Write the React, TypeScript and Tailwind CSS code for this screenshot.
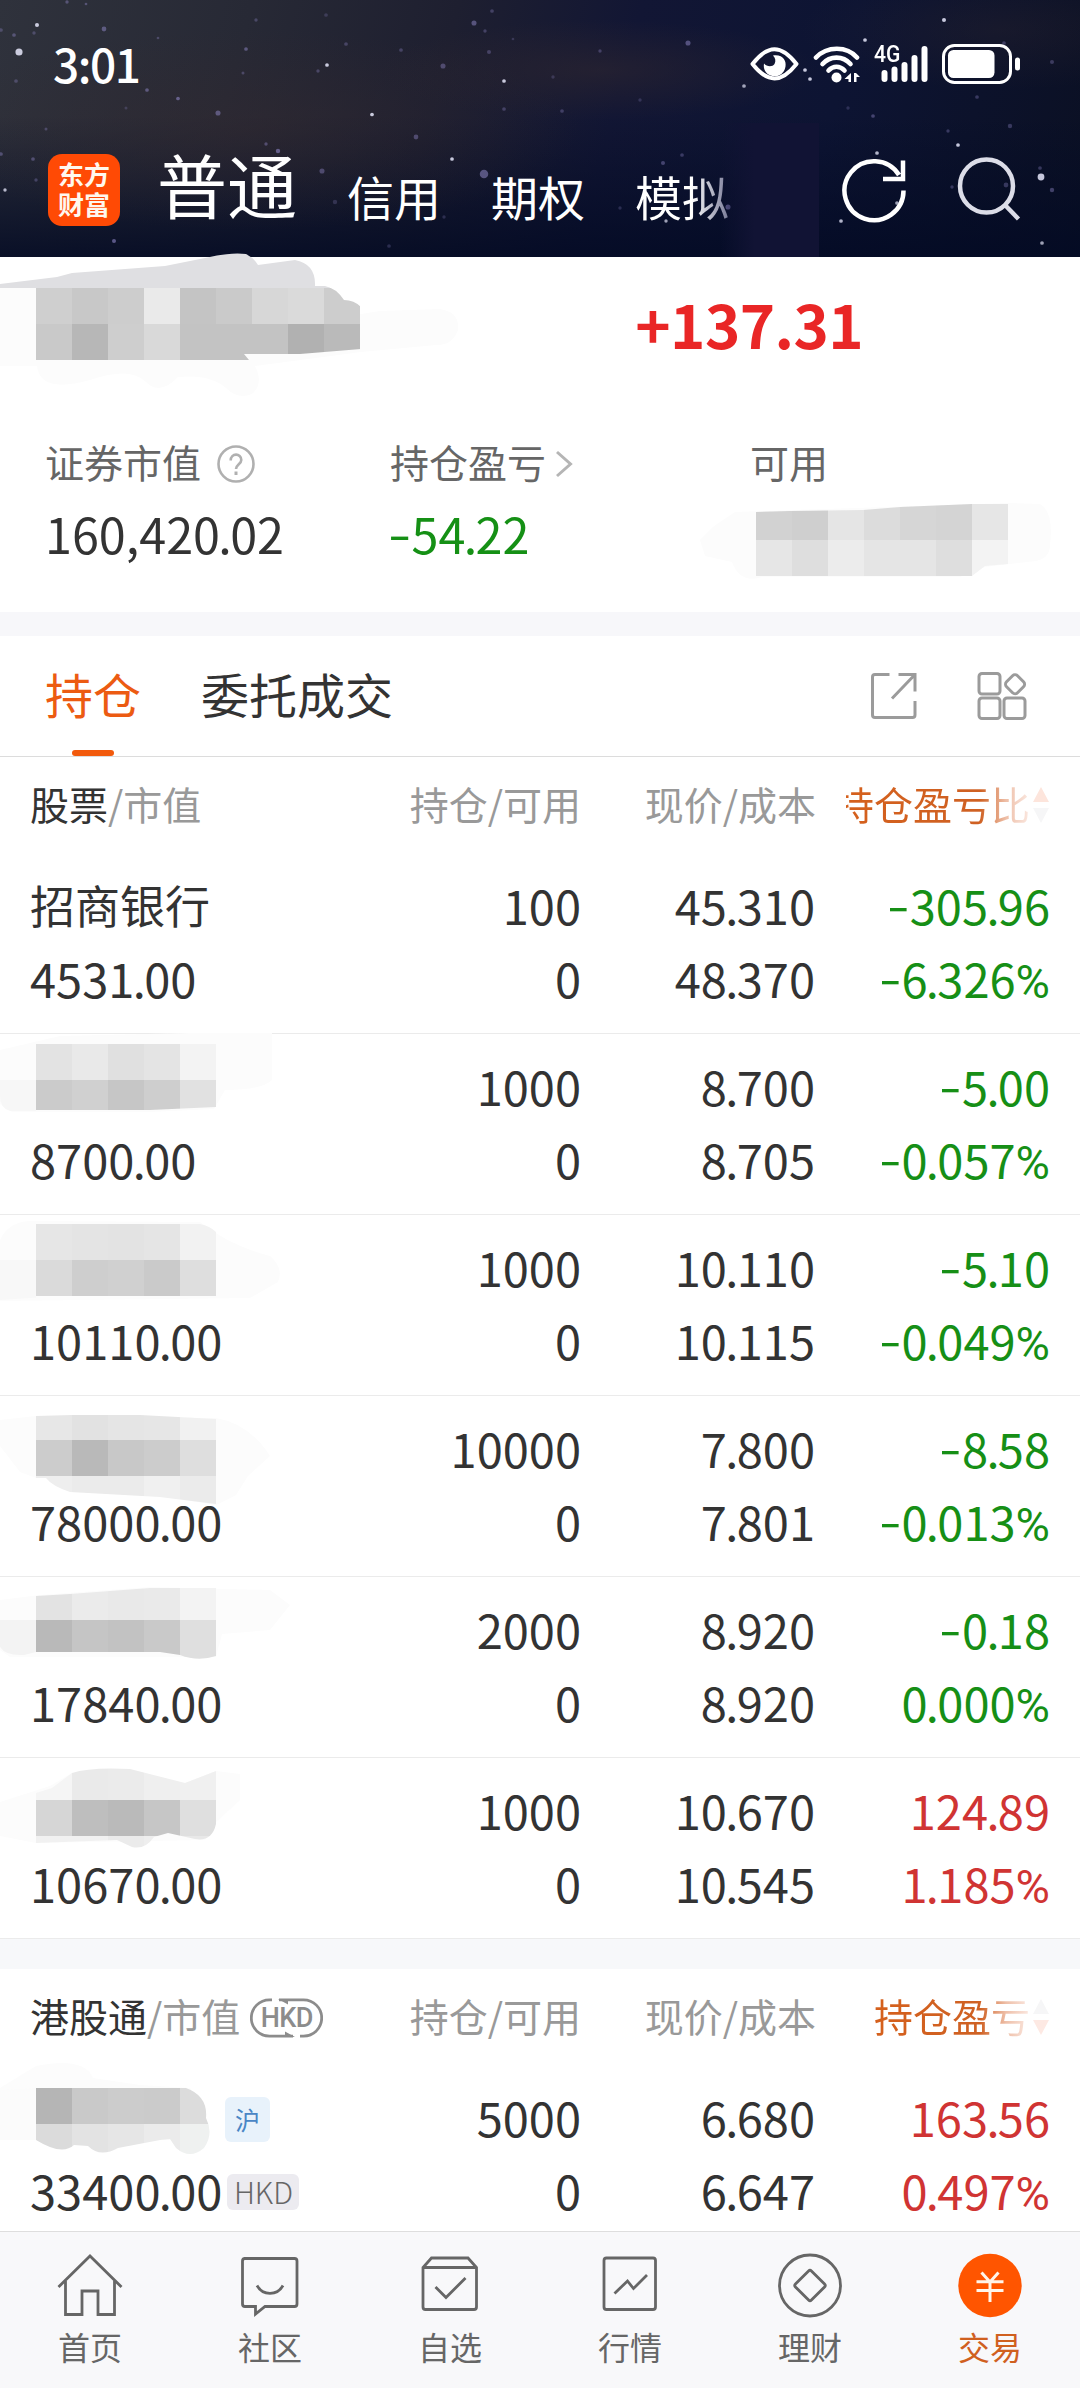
import React from "react";

type Tone = "ink" | "green" | "red";

const toneClass: Record<Tone, string> = {
  ink: "text-[#333333]",
  green: "text-[#168f16]",
  red: "text-[#d03433]",
};

/** Figures with a tight decimal point, a wide minus sign and a narrow percent sign. */
function Num({ children }: { children: string }) {
  return (
    <span className="whitespace-nowrap">
      {children.split("").map((c, i) => {
        if (c === ".") return <span key={i} className="-mx-[0.035em]">.</span>;
        if (c === "-")
          return (
            <span key={i} className="inline-block w-[0.485em] -translate-y-[2px] text-left leading-none">
              <span className="inline-block origin-left scale-x-[1.38]">-</span>
            </span>
          );
        if (c === "%")
          return <span key={i} className="font-[Roboto] leading-none">%</span>;
        return c;
      })}
    </span>
  );
}

type Block = [number, number, number, number, string];
interface Smudge {
  outline: string;
  blocks: Block[];
  haze?: string;
}

function cells(y: number, h: number, colors: string[]): Block[] {
  return colors.map((c, i) => [36 + i * 36, y, 36, h, c]);
}

function Mosaic({ id, s, top, height, width = 300, left = 0 }: { id: string; s: Smudge; top: number; height: number; width?: number; left?: number }) {
  return (
    <svg width={width} height={height} viewBox={`${left} ${top} ${width} ${height}`} className="block">
      <clipPath id={id}>
        <path d={s.outline} />
      </clipPath>
      {s.haze && <path d={s.haze} fill="#fcfcfc" />}
      <g clipPath={`url(#${id})`} shapeRendering="crispEdges">
        {s.blocks.map(([x, y, w, h, c], i) => (
          <rect key={i} x={x} y={y} width={w} height={h} fill={c} />
        ))}
      </g>
    </svg>
  );
}

interface Holding {
  name?: string;
  smudge?: Smudge;
  value: string;
  qty: string;
  price: string;
  cost: string;
  profit: string;
  ratio: string;
  tone: Tone;
}

const holdings: Holding[] = [
  { name: "招商银行", value: "4531.00", qty: "100", price: "45.310", cost: "48.370", profit: "-305.96", ratio: "-6.326%", tone: "green" },
  {
    value: "8700.00", qty: "1000", price: "8.700", cost: "8.705", profit: "-5.00", ratio: "-0.057%", tone: "green",
    smudge: {
      outline: "M0 1044H216V1107L150 1110H36V1111H10Q0 1108 0 1096Z",
      haze: "M0 1050L60 1036L190 1033H272V1080Q262 1090 225 1090L214 1109L150 1112H12L0 1104Z",
      blocks: [[0, 1080, 36, 36, "#f7f7f7"], ...cells(1044, 36, ["#e3e3e3", "#e9e9e9", "#e0e0e0", "#e4e4e4", "#f3f3f3"]), ...cells(1080, 32, ["#cbcbcb", "#d0d0d0", "#c6c6c6", "#cecece", "#e1e1e1"])],
    },
  },
  {
    value: "10110.00", qty: "1000", price: "10.110", cost: "10.115", profit: "-5.10", ratio: "-0.049%", tone: "green",
    smudge: {
      outline: "M0 1260L36 1224H200Q210 1226 216 1232V1296H60L0 1300Z",
      haze: "M0 1240Q8 1222 30 1221L200 1222Q230 1246 270 1256Q284 1268 278 1282L250 1298L0 1301Z",
      blocks: [[0, 1260, 36, 40, "#f8f8f8"], ...cells(1224, 36, ["#e6e6e6", "#e4e4e4", "#e3e3e3", "#e5e5e5", "#f2f2f2"]), ...cells(1260, 36, ["#dadada", "#cecece", "#d0d0d0", "#cacaca", "#dedede"])],
    },
  },
  {
    value: "78000.00", qty: "10000", price: "7.800", cost: "7.801", profit: "-8.58", ratio: "-0.013%", tone: "green",
    smudge: {
      outline: "M36 1416L72 1415H140L216 1419V1504L160 1497L70 1492Q52 1486 46 1478H36Z",
      haze: "M0 1420L36 1416L216 1418Q250 1424 270 1456L248 1476L236 1495L216 1505L46 1478H36L20 1472L0 1446Z",
      blocks: [...cells(1410, 30, ["#e7e7e7", "#e2e2e2", "#e5e5e5", "#e6e6e6", "#f1f1f1"]), ...cells(1440, 36, ["#cccccc", "#b9b9b9", "#c8c8c8", "#cccccc", "#dedede"]), ...cells(1476, 32, ["#eeeeee", "#ebebeb", "#ebebeb", "#f0f0f0", "#ebebeb"])],
    },
  },
  {
    value: "17840.00", qty: "2000", price: "8.920", cost: "8.920", profit: "-0.18", ratio: "0.000%", tone: "green",
    smudge: {
      outline: "M0 1620H36V1596L70 1594L150 1588H216V1656Q198 1662 180 1655L160 1652H36L24 1655Q6 1656 0 1647Z",
      haze: "M0 1600L40 1595L150 1587L270 1590L290 1605L270 1630L222 1634L216 1657H10L0 1650Z",
      blocks: [[0, 1620, 36, 40, "#f3f3f3"], ...cells(1588, 32, ["#e3e3e3", "#ebebeb", "#e9e9e9", "#eaeaea", "#f3f3f3"]), ...cells(1620, 42, ["#b9b9b9", "#c5c5c5", "#c2c2c2", "#c9c9c9", "#dfdfdf"])],
    },
  },
  {
    value: "10670.00", qty: "1000", price: "10.670", cost: "10.545", profit: "124.89", ratio: "1.185%", tone: "red",
    smudge: {
      outline: "M36 1800V1793L52 1788L72 1773Q90 1767 130 1769L185 1783L216 1771V1824Q212 1842 195 1839L168 1833L154 1837Q145 1850 132 1847L117 1840L36 1843Z",
      haze: "M0 1802L50 1786L72 1773H120L185 1783L216 1771L240 1774L240 1800L216 1822L205 1840L36 1843L0 1836Z",
      blocks: [...cells(1764, 36, ["#f5f5f5", "#eaeaea", "#ebebeb", "#efefef", "#f0f0f0"]), ...cells(1800, 36, ["#d6d6d6", "#bebebe", "#bababa", "#c6c6c6", "#dfdfdf"]), ...cells(1836, 14, ["#f1f1f1", "#f1f1f1", "#ebebeb", "#eeeeee", "#e8e8e8"])],
    },
  },
];

const accountSmudge: Smudge = {
  outline: "M0 284L57 277L72 273L165 266L205 258Q230 252 246 254Q254 258 258 265L295 260Q316 264 315 286L325 286Q336 288 344 300Q354 300 361 307V349L300 354H244L249 360H36V288H0Z",
  haze: "M0 288L36 286L361 314L380 311L440 309Q460 312 458 330Q452 346 436 345L361 352L255 366Q264 384 252 394Q238 400 226 388Q210 374 178 377Q160 396 146 382Q130 366 90 380Q40 394 37 366L0 366Z",
  blocks: [
    [0, 250, 330, 38, "#dfdfe2"],
    ...cells(288, 36, ["#cfcfcf", "#c8c8c8", "#cdcdcd", "#eaeaea", "#c4c4c4", "#cacaca", "#d7d7d7", "#dadada", "#cdcdcd"]),
    ...cells(324, 36, ["#c9c9c9", "#b7b7b7", "#cecece", "#d9d9d9", "#c3c3c3", "#c3c3c3", "#c3c3c3", "#b1b1b1", "#bababa"]),
  ],
};

const availSmudge: Smudge = {
  outline: "M756 512L790 511L863 510L900 507L972 504H1008V564L985 566L972 576H756Z",
  haze: "M700 540Q715 524 720 522L735 512L1008 503L1040 504Q1054 512 1050 545Q1050 558 1036 561L985 567L960 577H762Q740 584 732 562L705 556Z",
  blocks: [
    ...["#d2d2d2", "#cfcfcf", "#e5e5e5", "#dcdcdc", "#d6d6d6", "#d4d4d4", "#e6e6e6"].map((c, i): Block => [756 + i * 36, 504, 36, 36, c]),
    ...["#e6e6e6", "#dedede", "#ececec", "#e5e5e5", "#e5e5e5", "#dedede", "#f3f3f3"].map((c, i): Block => [756 + i * 36, 540, 36, 36, c]),
  ],
};

const hkSmudge: Smudge = {
  outline: "M0 2090L36 2088H186Q208 2096 206 2118Q214 2134 204 2148Q190 2160 176 2148L170 2139L160 2140L118 2148Q100 2158 88 2146L74 2145Q62 2156 36 2140H0Z",
  haze: "M0 2088L36 2066Q84 2056 93 2078L140 2085L190 2088L206 2118L190 2140L20 2140L0 2132Z",
  blocks: [
    [0, 2088, 36, 52, "#fbfbfb"],
    ...cells(2088, 36, ["#b5b5b5", "#c9c9c9", "#cccccc", "#cbcbcb", "#dcdcdc"]),
    ...cells(2124, 36, ["#dbdbdb", "#e3e3e3", "#e6e6e6", "#ebebeb", "#eff1f0"]),
  ],
};

const stars: [number, number, number, number][] = [
  [37, 25, 2.4, 1], [19, 52, 4.2, 1], [14, 35, 2.2, 0.5], [1, 30, 2.2, 0.4], [34, 33, 2, 0.4], [67, 2, 2, 0.5], [86, 4, 1.6, 0.5],
  [104, 29, 2.8, 0.6], [16, 81, 2.2, 0.4], [158, 38, 1.6, 0.4], [147, 90, 2.2, 0.6], [178, 98.5, 2.2, 0.7], [218, 113, 3, 0.6],
  [256, 20, 2, 0.4], [246, 49, 2.2, 0.6], [243, 73, 1.8, 0.4], [126, 108, 1.8, 0.3], [46, 129, 1.8, 0.4], [327, 65, 2.2, 1],
  [318, 71, 2, 0.4], [346, 44, 2.2, 0.4], [326, 15, 2.2, 0.3], [372, 114.5, 2.2, 1], [401, 50, 2.2, 0.4], [416, 137, 2.8, 0.5],
  [443, 66, 3, 0.5], [474, 23, 3, 0.6], [485, 31, 2, 0.4], [489, 52, 2.4, 0.4], [492, 11, 2.2, 0.4], [504, 81, 2.2, 1], [504, 109, 2.2, 0.4],
  [513, 39, 1.6, 0.3], [452, 159, 2.2, 1], [484, 174, 5, 0.65], [322, 171, 3, 0.5], [266, 144, 2, 0.5], [278, 151, 2.6, 0.7], [335, 202, 2.6, 0.3],
  [1, 154, 2.2, 0.5], [33, 159, 2.2, 0.5], [36, 180, 2, 0.4], [5, 190, 2, 0.9], [114, 241, 2.4, 0.7], [389, 246, 2.2, 0.3], [444, 217, 2, 0.3],
  [600, 51, 2, 0.4], [688, 43, 3, 0.6], [553, 77, 2, 0.3], [562, 111, 2.2, 0.4], [640, 100, 2, 0.3], [744, 86, 2.2, 0.8], [805, 70, 2.2, 1],
  [810, 79, 2.2, 1], [865, 40, 2.2, 1], [944, 20, 2.4, 1], [1004, 43, 2.2, 0.4], [1052, 62, 2.4, 0.4], [977, 97, 2.2, 0.4], [873, 116, 2.2, 0.5],
  [1010, 126, 2.6, 0.4], [958, 145, 2.2, 1], [877, 153, 2.2, 0.9], [1041, 177, 4, 1], [1040, 168, 2.2, 0.4], [1052, 190, 2.6, 0.5],
  [663, 163, 2.4, 0.5], [682, 155, 2.2, 0.4], [728, 207, 3, 0.7], [666, 221, 2, 0.8], [841, 221, 2.2, 0.9], [897, 203, 2.2, 0.8],
  [1006, 185, 2.8, 0.4], [952, 187, 2, 0.4], [1042, 243, 2.2, 0.8], [620, 208, 2, 0.3], [848, 108, 2, 0.3], [948, 131, 2, 0.4],
];

function StatusIcons() {
  return (
    <div className="flex items-center text-white">
      <svg width="49" height="34" viewBox="0 0 49 34" className="mr-[14px]">
        <path d="M2.500 17C12 5 19 2.300 24.500 2.300S37 5 46.500 17C37 29 30 31.500 24.500 31.500S12 29 2.500 17Z" fill="none" stroke="currentColor" strokeWidth="4" strokeLinejoin="round" />
        <path d="M23 8.500C33 7 36.500 14 35.500 19.500C34 28 27 30.500 21.500 28.800C15.500 27 13 22 14 16.500C17 20 22.500 20 24.500 17C26 14 25.500 11 23 8.500Z" fill="currentColor" />
      </svg>
      <svg width="49" height="38" viewBox="0 0 49 38" className="mr-[12px]" fill="none" stroke="currentColor">
        <path d="M3 12.500C14 0.800 34 0.800 44 12.500" strokeWidth="4.600" strokeLinecap="round" />
        <path d="M9.500 19C17 10.500 30 10.500 37.500 19" strokeWidth="4.600" strokeLinecap="round" />
        <path d="M15.500 25.500C20 20.500 27 20.500 31.500 25.500" strokeWidth="4.600" strokeLinecap="round" />
        <circle cx="23.500" cy="32.500" r="5" fill="currentColor" stroke="none" />
        <path d="M38 28V37H35.500V34L31.500 34ZM41 37V28H43L47 32H43.500V37Z" fill="currentColor" stroke="none" />
      </svg>
      <div className="relative h-[38px] w-[54px]">
        <span className="absolute -top-[5px] left-0 origin-left scale-x-[0.88] font-[Roboto] text-[24px] leading-[28px] font-medium">4G</span>
        <svg width="54" height="38" viewBox="0 0 54 38" fill="currentColor">
          <rect x="7.500" y="25" width="6" height="12" rx="3" />
          <rect x="17.500" y="21.500" width="6" height="15.500" rx="3" />
          <rect x="27.500" y="17" width="6" height="20" rx="3" />
          <rect x="37.500" y="10" width="6" height="27" rx="3" />
          <rect x="47.500" y="1" width="6" height="36" rx="3" />
        </svg>
      </div>
      <svg width="79" height="40" viewBox="0 0 79 40" className="ml-[14px]">
        <rect x="1.500" y="1.500" width="67" height="37" rx="11" fill="none" stroke="currentColor" strokeWidth="3" />
        <rect x="6" y="6" width="46.500" height="28" rx="5.500" fill="currentColor" />
        <rect x="73" y="13.500" width="5" height="13" rx="2.500" fill="currentColor" />
      </svg>
    </div>
  );
}

function Header() {
  return (
    <header className="relative h-[257px] overflow-hidden bg-[linear-gradient(105deg,#2f323c_0%,#272935_22%,#1e1f30_40%,#121634_56%,#0d1433_75%,#0b1023_100%)]">
      <svg width="1080" height="257" className="absolute inset-0">
        <defs>
          <linearGradient id="sky" x1="0" y1="0" x2="0" y2="1">
            <stop offset="0.450" stopColor="#030a24" stopOpacity="0" />
            <stop offset="1" stopColor="#030a24" stopOpacity="0.850" />
          </linearGradient>
          <radialGradient id="dust">
            <stop offset="0" stopColor="#33292f" stopOpacity="0.500" />
            <stop offset="1" stopColor="#33292f" stopOpacity="0" />
          </radialGradient>
          <linearGradient id="fade" x1="0" y1="0" x2="1" y2="0">
            <stop offset="0" stopColor="#111334" stopOpacity="0" />
            <stop offset="0.350" stopColor="#111334" stopOpacity="1" />
          </linearGradient>
        </defs>
        <rect width="1080" height="257" fill="url(#sky)" />
        <ellipse cx="250" cy="130" rx="330" ry="100" fill="url(#dust)" />
        <ellipse cx="600" cy="70" rx="220" ry="50" fill="url(#dust)" />
        <ellipse cx="1000" cy="30" rx="200" ry="60" fill="url(#dust)" opacity="0.600" />
        {stars.map(([x, y, r, o], i) => (
          <circle key={i} cx={x} cy={y} r={r * 0.85} fill={o > 0.75 ? "#e6e8fb" : "#8f87c6"} opacity={o * 0.85} />
        ))}
        <rect x="720" y="123" width="99" height="134" fill="url(#fade)" />
      </svg>
      <div className="relative flex h-[131px] items-center justify-between pr-[59px] pl-[53px]">
        <span className="-mt-[6px] text-[46px] leading-[60px] font-medium tracking-[-1.500px] text-white">3:01</span>
        <div className="-mt-[3px]">
          <StatusIcons />
        </div>
      </div>
      <div className="relative -mt-[9px] flex h-[135px] items-center pr-[58px] pl-[48px] text-white">
        <div className="flex h-[72px] w-[72px] flex-col items-center justify-center rounded-[14px] bg-[#ff4a05] pb-[1px] text-[26px] leading-[30px] font-bold text-[#fff8ee]">
          <span>东方</span>
          <span>财富</span>
        </div>
        <div className="-mt-[12px] ml-[37px] flex w-[581px] items-baseline gap-[50px] whitespace-nowrap">
          <span className="text-[70px] leading-[100px]">普通</span>
          <span className="relative top-[2px] text-[47px]">信用</span>
          <span className="relative top-[2px] text-[47px]">期权</span>
          <span className="relative top-[2px] bg-[linear-gradient(90deg,#ffffff_60%,#777996_100%)] bg-clip-text text-[47px] text-transparent">模拟</span>
        </div>
        <svg width="66" height="66" viewBox="0 0 66 66" className="ml-auto" fill="none" stroke="#ffffff" strokeWidth="4.500">
          <path d="M62.500 33.500A29.500 29.500 0 1 1 58 18M62 3.500V22H42" />
        </svg>
        <svg width="66" height="66" viewBox="0 0 66 66" className="ml-[49px]" fill="none" stroke="#dcdde8" strokeWidth="4.500">
          <circle cx="30.500" cy="29" r="26.500" />
          <path d="M49 48L62.500 62" />
        </svg>
      </div>
    </header>
  );
}

function Summary() {
  return (
    <section className="relative h-[355px] bg-white">
      <div className="absolute -top-[7px] left-0">
        <Mosaic id="m-account" s={accountSmudge} top={250} height={160} width={470} />
      </div>
      <div className="flex justify-end pt-[21px] pr-[217px] text-[60px] leading-[90px] font-bold tracking-[-0.600px] text-[#e92626]">
        +137.31
      </div>
      <div className="relative mt-[65px] grid grid-cols-[344px_360px_1fr] pl-[46px] text-[39px] leading-[56px] text-[#666666]">
        <div className="flex items-center">
          <span className="-ml-px">证券市值</span>
          <svg width="38" height="38" viewBox="0 0 38 38" className="mt-[5px] ml-[16px]" fill="none" stroke="#b0b0b0" strokeWidth="2.600">
            <circle cx="19" cy="19" r="17.500" />
            <path d="M13.700 15.500C13.700 7.800 24.300 7.800 24.300 15C24.300 19 19 19.500 19 24" />
            <path d="M19 26.500V30" strokeWidth="3" />
          </svg>
        </div>
        <div className="flex items-center">
          持仓盈亏
          <svg width="18" height="28" viewBox="0 0 18 28" className="mt-[5px] ml-[9px]" fill="none" stroke="#b5b5b5" strokeWidth="3">
            <path d="M2 2L15.500 14L2 26" />
          </svg>
        </div>
        <div>可用</div>
        <div className="-ml-px pt-[9px] text-[48.500px] leading-[70px] text-[#333333]">
          <Num>160,420.02</Num>
        </div>
        <div className="-ml-[2px] pt-[9px] text-[48.500px] leading-[70px] text-[#159015]">
          <Num>-54.22</Num>
        </div>
      </div>
      <div className="absolute top-[240px] left-[690px]">
        <Mosaic id="m-avail" s={availSmudge} top={497} height={90} width={380} left={690} />
      </div>
    </section>
  );
}

function Tabs() {
  return (
    <nav className="flex h-[121px] items-center border-b border-[#dcdcdc] bg-white pr-[52px] pl-[45px] text-[48px] leading-[70px]">
      <div className="relative -mt-[6px] text-[#ec5b12]">
        持仓
        <i className="absolute bottom-[-28px] left-[27px] h-[6px] w-[42px] rounded-full bg-[#f25a0c]" />
      </div>
      <div className="-mt-[6px] ml-[60px] text-[#333333]">委托成交</div>
      <svg width="48" height="48" viewBox="0 0 48 48" className="ml-auto" fill="none" stroke="#9b9b9b" strokeWidth="3">
        <path d="M19.500 2.500H5Q2.500 2.500 2.500 5V43Q2.500 45.500 5 45.500H42.500Q45 45.500 45 43V29M28.500 2.500H45V19.500M45 2.500L22 26.500" />
      </svg>
      <svg width="51" height="50" viewBox="0 0 51 50" className="ml-[59px]" fill="none" stroke="#9b9b9b" strokeWidth="3">
        <rect x="2" y="2.500" width="21" height="20.500" rx="3" />
        <rect x="2" y="27" width="21" height="20.500" rx="3" />
        <rect x="27" y="27" width="21" height="20.500" rx="3" />
        <rect x="30.300" y="5.500" width="15.500" height="15.500" rx="3.500" transform="rotate(45 38.050 13.250)" />
      </svg>
    </nav>
  );
}

function TableHeader({ title, last, hk }: { title: string; last: string; hk?: boolean }) {
  return (
    <div className="grid h-[95px] grid-cols-[300px_251px_235px_235px] items-center bg-white pb-[3px] pl-[30px] text-[39px] leading-[56px] text-[#999999]">
      <div className="flex items-center whitespace-nowrap">
        <span className="text-[#333333]">{title}</span>/市值
        {hk && (
          <span className="relative mt-[5px] ml-[10px] flex h-[40px] w-[73px] items-center justify-center font-[Roboto] text-[27px] font-medium text-[#8c8c8c]">
            <svg width="73" height="40" viewBox="0 0 73 40" className="absolute inset-0" fill="none" stroke="#8c8c8c" strokeWidth="2.800">
              <path d="M22 1.800H19.500A18 18 0 0 0 19.500 38.200H43M29 1.800H53.500A18 18 0 0 1 53.500 38.200H50" />
              <path d="M28 1L38 6.500V1ZM45 39L35 33.500V39Z" fill="#8c8c8c" stroke="none" />
            </svg>
            <span className="tracking-[-0.500px]">HKD</span>
          </span>
        )}
      </div>
      <div className="text-right">持仓/可用</div>
      <div className="text-right">现价/成本</div>
      <div className="flex items-center justify-end">
        <div className="flex w-[184px] justify-end overflow-hidden">
          <span className="shrink-0 bg-[linear-gradient(270deg,#fbe9e2_0px,#eebfa8_24px,#cf6123_50px,#d5601c_100%)] bg-clip-text whitespace-nowrap text-transparent">
            {last}
          </span>
        </div>
        <svg width="16" height="36" viewBox="0 0 16 36" className="mt-[4px] mr-[2px] ml-[3px]">
          <path d="M8 0L16 15H0Z" fill={hk ? "#f6f6f7" : "#fde5dc"} />
          <path d="M8 36L16 21H0Z" fill={hk ? "#fde9e3" : "#f6f6f7"} />
        </svg>
      </div>
    </div>
  );
}

function Figures({ h }: { h: Pick<Holding, "qty" | "price" | "cost" | "profit" | "ratio" | "tone"> }) {
  return (
    <>
      <div className="text-right">
        <div><Num>{h.qty}</Num></div>
        <div>0</div>
      </div>
      <div className="pr-px text-right">
        <div><Num>{h.price}</Num></div>
        <div><Num>{h.cost}</Num></div>
      </div>
      <div className={`pr-px text-right ${toneClass[h.tone]}`}>
        <div><Num>{h.profit}</Num></div>
        <div><Num>{h.ratio}</Num></div>
      </div>
    </>
  );
}

const rowClass =
  "relative grid grid-cols-[300px_251px_235px_235px] pt-[16px] pl-[30px] text-[47px] leading-[73px] text-[#333333]";

function Row({ h, index }: { h: Holding; index: number }) {
  return (
    <div className={`${rowClass} h-[181px] bg-white ${index > 0 ? "before:absolute before:inset-x-0 before:top-0 before:h-px before:bg-[#ebebeb]" : ""}`}>
      {h.smudge && (
        <div className="absolute top-0 left-0">
          <Mosaic id={`m-row-${index}`} s={h.smudge} top={852 + index * 181} height={120} />
        </div>
      )}
      <div className="relative">
        <div className="h-[73px] text-[45px] whitespace-nowrap">{h.name}</div>
        <div><Num>{h.value}</Num></div>
      </div>
      <Figures h={h} />
    </div>
  );
}

function HkRow() {
  return (
    <div className={`${rowClass} h-[167px] bg-white`}>
      <div className="absolute -top-[14px] left-0">
        <Mosaic id="m-hk" s={hkSmudge} top={2050} height={110} width={215} />
      </div>
      <div className="relative">
        <div className="flex h-[73px] items-center pl-[195px]">
          <span className="mt-[5px] flex h-[45px] w-[45px] items-center justify-center rounded-[6px] bg-[#e8f2fb] text-[25px] leading-none text-[#4a86c5]">沪</span>
        </div>
        <div className="flex items-center">
          <Num>33400.00</Num>
          <span className="mt-[4px] ml-[5px] flex h-[36px] w-[72px] items-center justify-center rounded-[6px] bg-[#ecebf0] text-[29.500px] leading-none font-light text-[#666666]">HKD</span>
        </div>
      </div>
      <Figures h={{ qty: "5000", price: "6.680", cost: "6.647", profit: "163.56", ratio: "0.497%", tone: "red" }} />
    </div>
  );
}

const navItems: { label: string; icon: React.ReactNode }[] = [
  { label: "首页", icon: <path d="M2.500 35L34 4L65.500 35M9.500 29V62.500H26V39H42V62.500H58.500V29" /> },
  {
    label: "社区",
    icon: (
      <>
        <path d="M8 6.500H58.500Q61 6.500 61 9V52Q61 54.500 58.500 54.500H29L19.500 62V54.500H9Q6.500 54.500 6.500 52V9Q6.500 6.500 9 6.500" />
        <path d="M21 33.500C27 44 41 44 47 33.500" />
      </>
    ),
  },
  {
    label: "自选",
    icon: (
      <>
        <path d="M7 15.500V55Q7 57.500 9.500 57.500H58Q60.500 57.500 60.500 55V15.500L52 6H15.500ZM7 15.500H60.500" />
        <path d="M19.500 35L30 45.500L49.500 26" />
      </>
    ),
  },
  {
    label: "行情",
    icon: (
      <>
        <rect x="8" y="6" width="51.500" height="51.500" rx="2.500" />
        <path d="M18.500 41.500L31.500 29L37.500 36.500L51 23" />
      </>
    ),
  },
  {
    label: "理财",
    icon: (
      <>
        <circle cx="34" cy="33.500" r="30.500" />
        <rect x="22.700" y="22.200" width="22.600" height="22.600" rx="2" transform="rotate(45 34 33.500)" />
      </>
    ),
  },
  {
    label: "交易",
    icon: (
      <>
        <circle cx="34" cy="33.500" r="31.700" fill="#ff5500" stroke="none" />
        <path d="M25.500 20.500L34 30L42.500 20.500M34 30V50M20.500 29.800H47.500M20.500 38.500H47.500" stroke="#fff5ea" strokeWidth="3" />
      </>
    ),
  },
];

function BottomNav() {
  return (
    <footer className="grid h-[157px] grid-cols-6 border-t border-[#dedede] bg-[#f8f8fa]">
      {navItems.map((item, i) => (
        <div key={item.label} className="flex flex-col items-center pt-[20px]">
          <svg width="68" height="67" viewBox="0 0 68 67" fill="none" stroke="#666666" strokeWidth="2.800">
            {item.icon}
          </svg>
          <span className={`mt-[4px] text-[32px] leading-[46px] ${i === 5 ? "text-[#d0601f]" : "text-[#666666]"}`}>{item.label}</span>
        </div>
      ))}
    </footer>
  );
}

export default function App() {
  return (
    <div lang="zh-CN" className="flex h-[2388px] w-[1080px] flex-col overflow-hidden bg-white font-['Noto_Sans_CJK_SC',sans-serif]">
      <Header />
      <Summary />
      <div className="h-[24px] bg-[#f7f7fa]" />
      <Tabs />
      <TableHeader title="股票" last="持仓盈亏比" />
      {holdings.map((h, i) => (
        <Row key={h.value} h={h} index={i} />
      ))}
      <div className="h-[31px] border-t border-[#ebebeb] bg-[#f7f8fa]" />
      <TableHeader title="港股通" last="持仓盈亏" hk />
      <HkRow />
      <BottomNav />
    </div>
  );
}
